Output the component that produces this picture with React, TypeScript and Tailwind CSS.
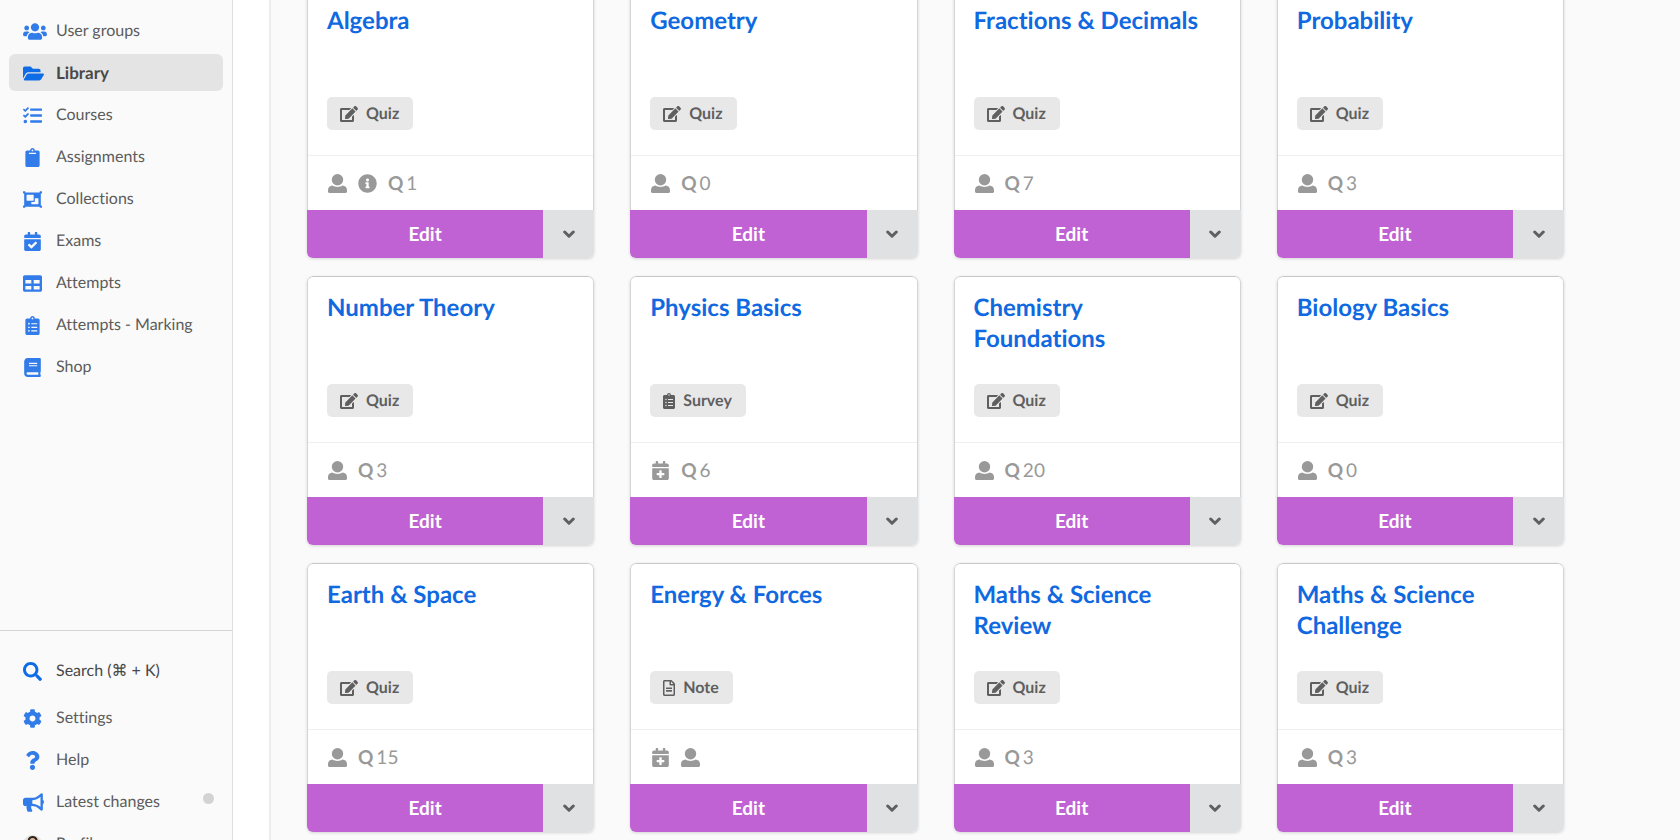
import type { ReactNode } from 'react';
import type { IconType } from 'react-icons';
import {
  FaBook,
  FaBullhorn,
  FaCalendarCheck,
  FaCalendarPlus,
  FaClipboard,
  FaClipboardList,
  FaCog,
  FaEdit,
  FaFolderOpen,
  FaInfoCircle,
  FaObjectGroup,
  FaQuestion,
  FaRegFileAlt,
  FaSearch,
  FaTable,
  FaTasks,
  FaUsers,
} from 'react-icons/fa';

type Kind = 'Quiz' | 'Survey' | 'Note';
type Flag = 'user' | 'info' | 'calendar';

interface LibraryItem {
  title: string;
  kind: Kind;
  flags: Flag[];
  questions?: number;
}

const items: LibraryItem[] = [
  { title: 'Algebra', kind: 'Quiz', flags: ['user', 'info'], questions: 1 },
  { title: 'Geometry', kind: 'Quiz', flags: ['user'], questions: 0 },
  { title: 'Fractions & Decimals', kind: 'Quiz', flags: ['user'], questions: 7 },
  { title: 'Probability', kind: 'Quiz', flags: ['user'], questions: 3 },
  { title: 'Number Theory', kind: 'Quiz', flags: ['user'], questions: 3 },
  { title: 'Physics Basics', kind: 'Survey', flags: ['calendar'], questions: 6 },
  { title: 'Chemistry Foundations', kind: 'Quiz', flags: ['user'], questions: 20 },
  { title: 'Biology Basics', kind: 'Quiz', flags: ['user'], questions: 0 },
  { title: 'Earth & Space', kind: 'Quiz', flags: ['user'], questions: 15 },
  { title: 'Energy & Forces', kind: 'Note', flags: ['calendar', 'user'] },
  { title: 'Maths & Science Review', kind: 'Quiz', flags: ['user'], questions: 3 },
  { title: 'Maths & Science Challenge', kind: 'Quiz', flags: ['user'], questions: 3 },
];

const navIcon = 'mx-auto h-[19px] w-[19px] shrink-0';
// Wide glyphs hang over the right side of the icon column
const wideIcon = 'h-[19px] w-[21px] max-w-none shrink-0';
const widestIcon = 'h-[19px] w-6 max-w-none shrink-0';

const navItems: { label: string; icon: IconType; iconClass?: string; active?: boolean }[] = [
  { label: 'User groups', icon: FaUsers, iconClass: widestIcon },
  { label: 'Library', icon: FaFolderOpen, iconClass: wideIcon, active: true },
  { label: 'Courses', icon: FaTasks },
  { label: 'Assignments', icon: FaClipboard },
  { label: 'Collections', icon: FaObjectGroup },
  { label: 'Exams', icon: FaCalendarCheck },
  { label: 'Attempts', icon: FaTable },
  { label: 'Attempts - Marking', icon: FaClipboardList },
  { label: 'Shop', icon: FaBook },
];

function UserIcon() {
  return (
    <svg viewBox="0 0 19 19" fill="currentColor" className="h-[19px] w-[19px]" aria-hidden="true">
      <circle cx="9.5" cy="5.8" r="5.7" />
      <path d="M4.6 11.6C6 12.6 7.7 13 9.5 13s3.5-.4 4.9-1.4C17.2 11.7 19 13.5 19 16v1.6c0 .8-.5 1.4-1.3 1.4H1.300C.5 19 0 18.4 0 17.6V16c0-2.5 1.8-4.300 4.600-4.400z" />
    </svg>
  );
}

function ChevronIcon() {
  return (
    <svg viewBox="0 0 12 8" fill="none" stroke="currentColor" strokeWidth="3" strokeLinecap="round" strokeLinejoin="round" className="h-2 w-3" aria-hidden="true">
      <path d="M1.7 2 6 6.2 10.3 2" />
    </svg>
  );
}

function Avatar() {
  return (
    <svg viewBox="0 0 19 19" className="mx-auto h-[19px] w-[19px] shrink-0 rounded-full" aria-hidden="true">
      <rect width="19" height="19" fill="#e4e0dc" />
      <path d="M4.5 8C4 3 6.5 1 9.7 1s5.6 2 5 7z" fill="#2e2620" />
      <ellipse cx="9.6" cy="7.8" rx="3.7" ry="4.8" fill="#e0b79c" />
      <path d="M2 19c0-4 3-6 7.5-6s7.5 2 7.5 6z" fill="#39485c" />
    </svg>
  );
}

function NavLink({ label, icon, active = false, strong = false, dot = false }: {
  label: string;
  icon: ReactNode;
  active?: boolean;
  strong?: boolean;
  dot?: boolean;
}) {
  return (
    <a
      href="#"
      className={`relative flex h-[37px] shrink-0 items-center gap-[14px] rounded-md pt-px pl-[14px] leading-6 ${
        active ? 'bg-[#e4e4e4] text-[17px] font-bold text-[#484848]' : strong ? 'text-base text-[#484848]' : 'text-base text-[#5c5c5c]'
      }`}
    >
      <span className={`flex w-[19px] shrink-0 ${active || strong ? 'text-[#0e6de6]' : 'text-[#317ce8]'}`}>{icon}</span>
      <span className="whitespace-nowrap">{label}</span>
      {dot && <span className="absolute top-[10px] right-[9px] h-[11px] w-[11px] rounded-full bg-[#d3d3d3]" />}
    </a>
  );
}

function Sidebar() {
  return (
    <aside className="flex h-full w-[233px] shrink-0 flex-col border-r border-[#dededf] bg-[#fafafa]">
      <nav className="flex min-h-0 flex-1 flex-col gap-[5px] overflow-hidden px-[9px] pt-3">
        {navItems.map(({ label, icon: Icon, iconClass = navIcon, active }) => (
          <NavLink key={label} label={label} active={active} icon={<Icon className={iconClass} />} />
        ))}
      </nav>
      {/* Account links, the last one runs below the fold */}
      <nav className="flex max-h-[210px] shrink-0 flex-col gap-[5px] overflow-hidden border-t border-[#d4d4d5] px-[9px] pt-[21px]">
        <div className="mb-[5px] shrink-0">
          <NavLink label="Search (⌘ + K)" strong icon={<FaSearch className={navIcon} />} />
        </div>
        <NavLink label="Settings" icon={<FaCog className={navIcon} />} />
        <NavLink label="Help" icon={<FaQuestion className={navIcon} />} />
        <NavLink label="Latest changes" dot icon={<FaBullhorn className={wideIcon} />} />
        <NavLink label="Profile" icon={<Avatar />} />
      </nav>
    </aside>
  );
}

function KindBadge({ kind }: { kind: Kind }) {
  return (
    <span className="inline-flex h-[33px] items-center rounded-[5px] bg-[#e8e8e8] pr-[14px] pl-[13px] text-base leading-6 font-bold text-[#5f5f5f]">
      {kind === 'Quiz' && <FaEdit className="mr-2 h-4 w-[18px]" />}
      {kind === 'Survey' && <FaClipboardList className="mr-2 h-4 w-3" />}
      {kind === 'Note' && <FaRegFileAlt className="mr-2 h-4 w-3" />}
      {kind}
    </span>
  );
}

function FlagIcon({ flag }: { flag: Flag }) {
  if (flag === 'user') return <UserIcon />;
  if (flag === 'info') return <FaInfoCircle className="h-[19px] w-[19px]" />;
  return <FaCalendarPlus className="h-[19px] w-[19px]" />;
}

function Card({ title, kind, flags, questions }: LibraryItem) {
  return (
    <article className="overflow-hidden rounded-md bg-white shadow-[0_1px_3px_0_#d4d4d5]">
      <div className="rounded-t-md border-x border-t border-[#d4d4d5] border-t-[#c8c8c9]">
        <div className="px-[19px] pt-[15px] pb-[25px]">
          <h2 className="h-[92px] pr-5 text-2xl leading-[31px] font-bold text-[#1069e0]">
            <a href="#">{title}</a>
          </h2>
          <div className="flex">
            <KindBadge kind={kind} />
          </div>
        </div>
        <div className="flex h-[55px] items-center gap-[11px] border-t border-[#efefef] px-5 pt-px text-[#999]">
          {flags.map((flag) => (
            <FlagIcon key={flag} flag={flag} />
          ))}
          {questions !== undefined && (
            <span className="flex gap-[3px] text-[19px] leading-6">
              <span className="font-bold">Q</span>
              <span>{questions}</span>
            </span>
          )}
        </div>
      </div>
      <div className="flex h-12">
        <button type="button" className="flex-1 bg-[#c062d4] text-[19px] leading-6 font-bold text-white">
          Edit
        </button>
        <button type="button" aria-label={`More actions for ${title}`} className="flex w-[51px] items-center justify-center bg-[#e0e1e2] text-[#5f6061]">
          <ChevronIcon />
        </button>
      </div>
    </article>
  );
}

export default function App() {
  return (
    <div className="flex h-screen overflow-hidden bg-white font-['Lato','DejaVu_Sans',sans-serif] antialiased [font-variant-ligatures:none] [text-rendering:geometricPrecision]">
      <Sidebar />
      <main className="ml-9 h-full flex-1 overflow-hidden border-l-2 border-[#ececec] bg-[#fafafa] pr-[116px] pl-9">
        {/* The list is scrolled slightly past its first row */}
        <div className="-mt-[11px] grid grid-cols-4 gap-x-9 gap-y-[18px]">
          {items.map((item) => (
            <Card key={item.title} {...item} />
          ))}
        </div>
      </main>
    </div>
  );
}
